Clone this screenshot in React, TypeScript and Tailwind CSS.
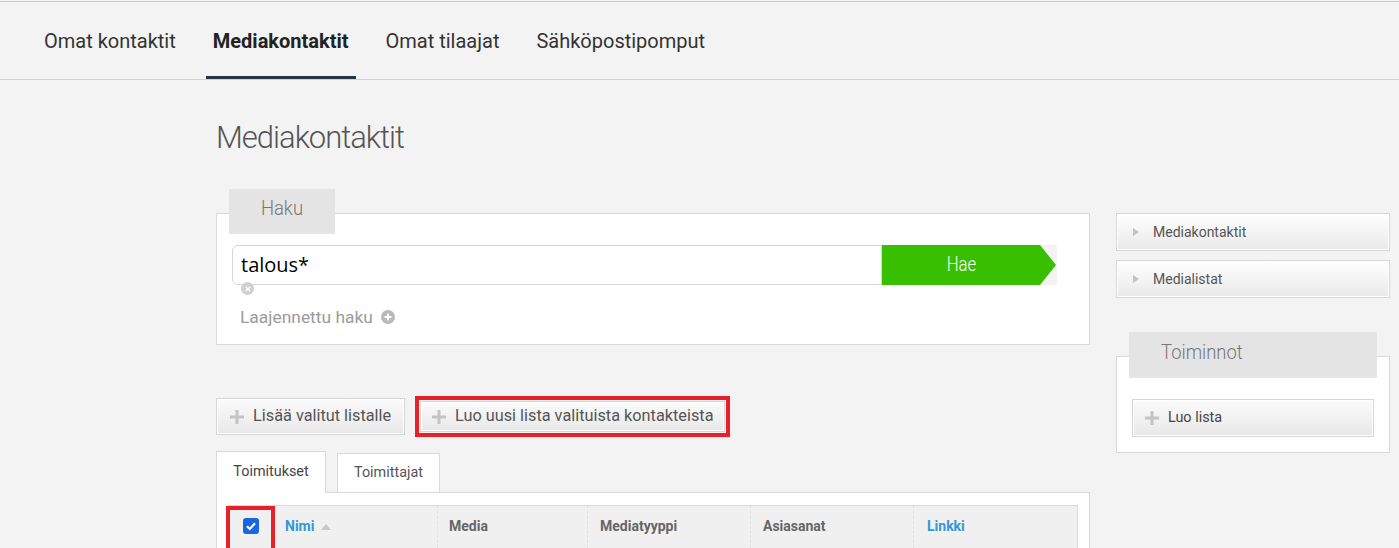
import React from 'react';

const roboto = { fontFamily: 'Roboto, "Liberation Sans", sans-serif' };

function PlusIcon({ className = '' }: { className?: string }) {
  return (
    <svg viewBox="0 0 14 14" className={className}>
      <rect x="5.5" y="0" width="3" height="14" fill="#c4c4c4" />
      <rect x="0" y="5.5" width="14" height="3" fill="#c4c4c4" />
    </svg>
  );
}

function GrayButton({ label, className = '' }: { label: string; className?: string }) {
  return (
    <button className={`flex items-center gap-[9px] border border-[#d6d6d6] bg-linear-to-b from-[#fbfbfb] to-[#e8e8e8] shadow-[inset_0_0_0_1px_#fff] text-[16.3px] text-[#555] ${className}`}>
      <PlusIcon className="w-[14px] h-[14px]" />
      <span>{label}</span>
    </button>
  );
}

function SideLink({ label, className = '' }: { label: string; className?: string }) {
  return (
    <div className={`flex items-center border border-[#d8d8d8] bg-linear-to-b from-white to-[#e9e9e9] shadow-[inset_0_0_0_1px_#fff] pl-[16px] text-[14px] text-[#555] ${className}`}>
      <svg viewBox="0 0 6 8" className="w-[6px] h-[8px] mr-[14px]">
        <polygon points="0,0 6,4 0,8" fill="#c2c2c2" />
      </svg>
      {label}
    </div>
  );
}

export default function App() {
  const navItems = ['Omat kontaktit', 'Mediakontaktit', 'Omat tilaajat', 'Sähköpostipomput'];
  const columns = [
    { label: 'Nimi', w: 'w-[164px]', blue: true, pl: 'pl-[12px]' },
    { label: 'Media', w: 'w-[150px]', pl: 'pl-[11px]' },
    { label: 'Mediatyyppi', w: 'w-[163px]', pl: 'pl-[12px]' },
    { label: 'Asiasanat', w: 'w-[163px]', pl: 'pl-[12px]' },
    { label: 'Linkki', w: 'w-[164px]', blue: true, pl: 'pl-[13px]' },
  ];

  return (
    <div className="min-h-screen bg-[#f3f3f3] pt-px" style={roboto}>
      <div className="border-t border-[#c8c8c8]">
        <nav className="h-[78px] border-b border-[#d2d2d2] flex items-stretch pl-[37px] gap-[23px]">
          {navItems.map((item, i) => (
            <div
              key={item}
              className={`relative flex items-center px-[7px] pt-[1px] text-[20px] ${i === 1 ? 'font-bold text-[#222]' : 'text-[#333]'}`}
            >
              {item}
              {i === 1 && <div className="absolute left-0 right-0 bottom-0 h-[3px] bg-[#283347]" />}
            </div>
          ))}
        </nav>

        <div className="flex pl-[216px]">
          {/* main column */}
          <div className="w-[874px]">
            <h1 className="mt-[40px] h-[36px] leading-[36px] text-[31px] font-light tracking-[-1px] text-[#555]">
              Mediakontaktit
            </h1>

            <div className="mt-[33px]">
              <div className="relative z-10 ml-[13px] w-[106px] h-[45px] -mb-[21px] bg-[#e4e4e4] flex items-center justify-center pb-[5px] text-[21px] font-light text-[#777]">
                <span className="inline-block scale-x-[0.88]">Haku</span>
              </div>
              <div className="h-[132px] border border-[#d9d9d9] bg-white pl-[15px] pt-[31px]">
                <div className="relative flex h-[40px]">
                  <div
                    className="w-[650px] h-[40px] border border-[#d6d6d6] rounded-l-[6px] pl-[8px] flex items-center text-[20px] text-black"
                    style={{ fontFamily: '"Open Sans", sans-serif' }}
                  >
                    talous*
                  </div>
                  <div className="w-[158px] h-[40px] bg-[#38c000] flex items-center justify-center text-white text-[21px] font-light">
                    <span className="inline-block scale-x-[0.8]">Hae</span>
                  </div>
                  <svg viewBox="0 0 17 40" className="w-[17px] h-[40px] bg-[#f3f3f3]">
                    <polygon points="0,0 16,20 0,40" fill="#38c000" />
                  </svg>
                  <div className="absolute left-[9px] top-[37px] w-[13px] h-[13px] rounded-full bg-[#cfcfcf] flex items-center justify-center">
                    <svg viewBox="0 0 8 8" className="w-[6px] h-[6px]">
                      <path d="M1 1 L7 7 M7 1 L1 7" stroke="#fff" strokeWidth="1.6" />
                    </svg>
                  </div>
                </div>
                <div className="mt-[19px] ml-[8px] flex items-center gap-[8px] text-[17.4px] text-[#9b9b9b]">
                  <span>Laajennettu haku</span>
                  <span className="w-[14px] h-[14px] rounded-full bg-[#b9b9b9] flex items-center justify-center">
                    <svg viewBox="0 0 8 8" className="w-[8px] h-[8px]">
                      <path d="M4 0.5 V7.5 M0.5 4 H7.5" stroke="#fff" strokeWidth="2" />
                    </svg>
                  </span>
                </div>
              </div>
            </div>

            <div className="mt-[51px] flex items-center gap-[10px]">
              <GrayButton label="Lisää valitut listalle" className="h-[37px] w-[189px] pl-[13px]" />
              <div className="border-4 border-[#e8202a] p-px">
                <GrayButton label="Luo uusi lista valituista kontakteista" className="h-[31px] w-[305px] pl-[11px]" />
              </div>
            </div>

            <div className="mt-[14px] flex items-end gap-[11px] text-[14.4px] text-[#444]">
              <div className="relative z-10 -mb-px w-[110px] h-[42px] border border-b-0 border-[#d9d9d9] bg-white flex items-center justify-center pb-[1px]">
                Toimitukset
              </div>
              <div className="w-[103px] h-[39px] border border-b-0 border-[#d9d9d9] bg-white flex items-center justify-center text-[#555]">
                Toimittajat
              </div>
            </div>

            <div className="border border-[#d9d9d9] bg-white px-[11px] pt-[12px] pb-[12px]">
              <div className="flex h-[43px] border-t border-r border-[#d9d9d9] bg-[#f0f0f0] text-[14px] font-bold text-[#666]">
                <div className="relative w-[45px] border-l border-[#e4e4e4]">
                  <div className="absolute -left-[3px] top-0 w-[49px] h-[47px] border-4 border-[#e8202a]" />
                  <div className="absolute left-[14px] top-[12px] w-[16px] h-[16px] rounded-[3px] bg-[#1a66e0] flex items-center justify-center">
                    <svg viewBox="0 0 12 12" className="w-[12px] h-[12px]">
                      <path d="M2 6.2 L4.8 9 L10 3.2" stroke="#fff" strokeWidth="2.2" fill="none" />
                    </svg>
                  </div>
                </div>
                {columns.map((c, i) => (
                  <div
                    key={c.label}
                    className={`${c.w} ${c.pl} flex items-center pb-[1px] ${i > 0 ? 'border-l border-dashed border-[#e2e2e2]' : ''} ${c.blue ? 'text-[#3398d6]' : ''}`}
                  >
                    {c.label}
                    {i === 0 && (
                      <svg viewBox="0 0 10 6" className="w-[10px] h-[6px] ml-[7px]">
                        <polygon points="0,6 5,0 10,6" fill="#c8c8c8" />
                      </svg>
                    )}
                  </div>
                ))}
              </div>
              <div className="flex h-[40px] bg-[#f0f0f0] border-r border-[#d9d9d9] pt-[2px]">
                <div className="w-[45px]" />
                {columns.map((c) => (
                  <div key={c.label} className={`${c.w} px-[2px]`}>
                    <div className="h-full bg-white" />
                  </div>
                ))}
              </div>
            </div>
          </div>

          {/* sidebar */}
          <div className="ml-[26px] w-[274px] mt-[133px]">
            <SideLink label="Mediakontaktit" className="h-[38px]" />
            <SideLink label="Medialistat" className="h-[38px] mt-[9px]" />
            <div className="mt-[34px]">
              <div className="relative z-10 ml-[13px] w-[248px] h-[46px] -mb-[22px] bg-[#e4e4e4] flex items-center pl-[32px] pb-[5px] text-[21px] font-light text-[#777]">
                <span className="inline-block origin-left scale-x-[0.88]">Toiminnot</span>
              </div>
              <div className="h-[97px] border border-[#d9d9d9] bg-white pt-[42px] pl-[15px]">
                <button className="flex items-center gap-[9px] w-[242px] h-[38px] pl-[12px] border border-[#d6d6d6] bg-linear-to-b from-[#fbfbfb] to-[#e8e8e8] shadow-[inset_0_0_0_1px_#fff] text-[14.4px] text-[#444]">
                  <PlusIcon className="w-[14px] h-[14px]" />
                  <span>Luo lista</span>
                </button>
              </div>
            </div>
          </div>
        </div>
      </div>
    </div>
  );
}
